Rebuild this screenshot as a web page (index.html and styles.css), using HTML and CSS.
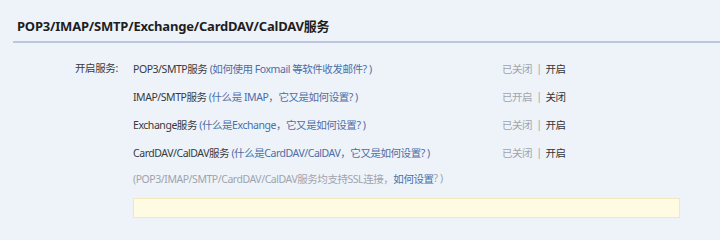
FILE: index.html
```html
<!DOCTYPE html>
<html>
<head>
<meta charset="utf-8">
<link rel="stylesheet" href="styles.css">
</head>
<body>
<div class="page">
  <h2 class="title">POP3/IMAP/SMTP/Exchange/CardDAV/CalDAV服务</h2>
  <div class="section">
    <div class="label">开启服务:</div>
    <div class="content">
      <div class="row">
        <div class="desc">POP3/SMTP服务 <span class="link">(如何使用 Foxmail 等软件收发邮件? )</span></div>
        <div class="status"><span class="muted">已关闭</span><span class="sep">|</span><span class="act">开启</span></div>
      </div>
      <div class="row">
        <div class="desc">IMAP/SMTP服务 <span class="link">(什么是 IMAP，它又是如何设置? )</span></div>
        <div class="status"><span class="muted">已开启</span><span class="sep">|</span><span class="act">关闭</span></div>
      </div>
      <div class="row">
        <div class="desc">Exchange服务 <span class="link">(什么是Exchange，它又是如何设置? )</span></div>
        <div class="status"><span class="muted">已关闭</span><span class="sep">|</span><span class="act">开启</span></div>
      </div>
      <div class="row">
        <div class="desc">CardDAV/CalDAV服务 <span class="link">(什么是CardDAV/CalDAV，它又是如何设置? )</span></div>
        <div class="status"><span class="muted">已关闭</span><span class="sep">|</span><span class="act">开启</span></div>
      </div>
      <div class="row note">(POP3/IMAP/SMTP/CardDAV/CalDAV服务均支持SSL连接，<span class="note-link">如何设置</span>? )</div>
      <div class="notice"></div>
    </div>
  </div>
</div>
</body>
</html>
```

FILE: styles.css
```css
html, body {
  margin: 0;
  padding: 0;
  background: #eef3fa;
}
body {
  font-family: "Noto Sans", "Noto Sans CJK SC", sans-serif;
  font-size: 10.5px;
  color: #3a3a3a;
}
.page {
  padding: 17px 0 0 13px;
}
.title {
  margin: 0;
  padding: 0 0 6px 4px;
  font-size: 13px;
  font-weight: bold;
  color: #1e1e1e;
  line-height: 18px;
  letter-spacing: -0.2px;
  border-bottom: 2px solid #bcc6de;
}
.section {
  display: flex;
  padding-top: 11px;
}
.label {
  width: 58px;
  padding-left: 62px;
  line-height: 28px;
  letter-spacing: -0.4px;
}
.content {
  display: flex;
  flex-direction: column;
  width: 547px;
}
.row {
  display: flex;
  height: 28px;
  align-items: center;
  letter-spacing: -0.45px;
}
.desc {
  width: 369px;
}
.link {
  color: #4b6ea8;
}
.status {
  display: flex;
  align-items: center;
}
.muted {
  color: #a0a4ab;
}
.sep {
  color: #a0a4ab;
  margin: 0 4px;
}
.act {
  color: #333;
}
.note {
  color: #a0a4ab;
  height: 24px;
}
.note-link {
  color: #4b6ea8;
}
.notice {
  margin-top: 8px;
  height: 20px;
  background: #fffbe3;
  border: 1px solid #f3e8bd;
  box-sizing: border-box;
}
```
